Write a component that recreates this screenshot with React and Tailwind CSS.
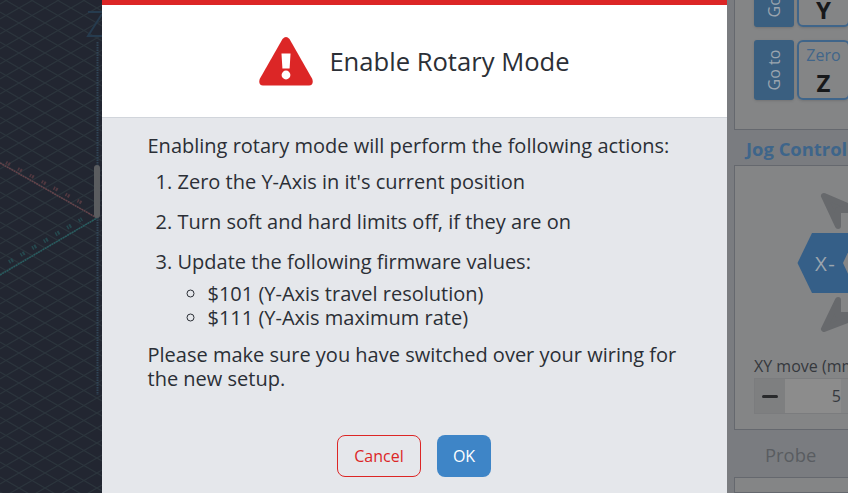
const GRID = Array.from({ length: 48 }, (_, i) => -60 + i * 15);

function Viewport() {
  return (
    <div className="w-[102px] shrink-0 overflow-hidden bg-[#222631]">
      <svg width="102" height="493" viewBox="0 0 102 493">
        <g stroke="#2c353d" strokeWidth="1.200">
          {GRID.map((y) => (
            <path key={y} d={`M0 ${y + 12}l102 58.9M0 ${y + 4}l102 -58.9`} />
          ))}
        </g>
        <path d="M88 12H102M102 14L88 36H102" fill="none" stroke="#263b4e" strokeWidth="2" />
        <path d="M97.500 42V395" stroke="#304557" strokeWidth="2" strokeDasharray="1.500 1" />
        <path d="M0 163L97 218" stroke="#65434a" strokeWidth="1.500" strokeDasharray="2 .6" />
        <path d="M0 275L97 218" stroke="#285d60" strokeWidth="1.500" strokeDasharray="2 .6" />
        <path d="M6 162.500L82 203" stroke="#503840" strokeWidth="3.500" strokeDasharray="1.500 1 2 9" />
        <path d="M9 262L82 219" stroke="#26484e" strokeWidth="4" strokeDasharray="1.500 1 2 9" />
        <path d="M97 168V215" stroke="#5a5c5f" strokeWidth="6" strokeLinecap="round" />
      </svg>
    </div>
  );
}

function Warning() {
  return (
    <svg width="54" height="49" viewBox="0 0 54 49">
      <path d="M23.500 2Q27 -2 30.500 2L53.300 42Q55 48 50 48.500H4Q-1 48 .7 42Z" fill="#dc2626" />
      <path d="M22.500 16.500H31.500L30.600 31.500H23.400Z" fill="#fff" />
      <circle cx="27" cy="38" r="4.400" fill="#fff" />
    </svg>
  );
}

function Dialog() {
  return (
    <div className="flex w-[625px] shrink-0 flex-col border-t-[5px] border-[#dc2626] bg-[#e5e7eb] text-xl leading-6 text-[#2b2f36]">
      <div className="flex h-[113px] items-center justify-center gap-4 border-b border-[#d1d5db] bg-white">
        <Warning />
        <h1 className="pt-[2px] text-[25.6px] leading-8">Enable Rotary Mode</h1>
      </div>
      <div className="pl-[45.5px] pr-[46px] pt-4">
        <p>Enabling rotary mode will perform the following actions:</p>
        <ol className="mt-3 list-decimal space-y-4 pl-[30px]">
          <li>Zero the Y-Axis in it&apos;s current position</li>
          <li>Turn soft and hard limits off, if they are on</li>
          <li>
            Update the following firmware values:
            <ul className="mt-2 list-[circle] pl-[30px]">
              <li>$101 (Y-Axis travel resolution)</li>
              <li>$111 (Y-Axis maximum rate)</li>
            </ul>
          </li>
        </ol>
        <p className="mt-[13px]">Please make sure you have switched over your wiring for the new setup.</p>
      </div>
      <div className="mt-[44px] flex justify-center gap-4 pr-[1px] text-base">
        <button className="h-[42px] w-[84px] rounded-lg border border-[#dc2626] text-[#dc2626]">Cancel</button>
        <button className="h-[42px] w-[54px] rounded-lg bg-[#3e85c7] font-medium text-white">OK</button>
      </div>
    </div>
  );
}

function Axis({ name }) {
  return (
    <div className="flex h-[60px] gap-[3px]">
      <div className="flex w-10 items-center justify-center rounded-[3px] bg-[#3a5f80] text-[#9aa5af] shadow">
        <span className="-rotate-90 whitespace-nowrap text-base font-medium">Go to</span>
      </div>
      <div className="flex w-[53px] flex-col items-center rounded-md border-2 border-[#3f658a] pt-[3px] shadow">
        <span className="text-base leading-5 text-[#41658a]">Zero</span>
        <span className="mt-[4px] text-2xl font-bold leading-7 text-[#17181a]">{name}</span>
      </div>
    </div>
  );
}

function Sidebar() {
  return (
    <div className="flex w-[121px] shrink-0 flex-col overflow-hidden bg-[#7a7c80] pl-[7px]">
      <div className="flex h-[130px] w-[140px] shrink-0 flex-col gap-[13px] border border-t-0 border-[#65686e] bg-[#848586] pl-[19px]">
        <div className="-mt-[33px]"><Axis name="Y" /></div>
        <Axis name="Z" />
      </div>
      <h2 className="h-[35px] shrink-0 whitespace-nowrap pl-3 pt-[7px] text-[18.4px] font-bold leading-6 text-[#3e658a]">Jog Control</h2>
      <div className="h-[265px] w-[140px] shrink-0 border border-[#65686e] bg-[#848586]">
        <svg className="mt-[26px] ml-[62px]" width="60" height="142" viewBox="797 192 60 142">
          <g fill="#67696c" stroke="#67696c" strokeWidth="6" strokeLinejoin="round">
            <path d="M824 196L850 207V210H838V226Z" />
            <path d="M824 329L850 319V315H838V300Z" />
          </g>
          <path d="M812 233H860V293H812L797.500 263Z" fill="#355f88" />
          <path d="M850 248L843 263L850 278Z" fill="#848586" />
          <text x="815" y="271" fontSize="20.500" fontWeight="500" fill="#9ca5ae" letterSpacing="1.500">X-</text>
        </svg>
        <div className="pl-[19px]">
          <p className="-mt-[1px] whitespace-nowrap pt-[21px] text-base leading-6 text-[#35383d]">XY move (mm)</p>
          <div className="flex h-[36px] border border-[#7b7c7e]">
            <div className="flex w-[30px] items-center justify-center bg-[#7e7f80]">
              <div className="h-[3px] w-4 rounded bg-[#292a2c]" />
            </div>
            <div className="w-14 bg-[#8c8c8c] text-right text-base leading-[34px] text-[#35383d]">5</div>
          </div>
        </div>
      </div>
      <div className="h-[47px] shrink-0 pl-[31px] pt-[13px] text-[18.4px] leading-6 text-[#595c61]">Probe</div>
      <div className="w-[140px] grow border border-[#65686e] bg-[#848586]" />
    </div>
  );
}

export default function App() {
  return (
    <div className="flex h-[493px] w-[848px] overflow-hidden font-['Open_Sans','Noto_Sans',sans-serif]">
      <Viewport />
      <Dialog />
      <Sidebar />
    </div>
  );
}
